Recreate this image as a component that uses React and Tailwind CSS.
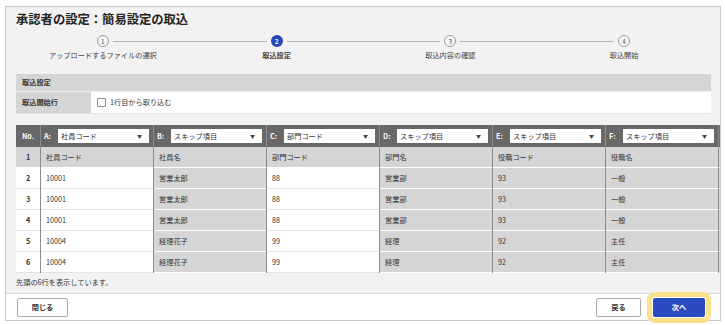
const steps = ["アップロードするファイルの選択", "取込設定", "取込内容の確認", "取込開始"];

const columns = [
  { key: "A", value: "社員コード" },
  { key: "B", value: "スキップ項目" },
  { key: "C", value: "部門コード" },
  { key: "D", value: "スキップ項目" },
  { key: "E", value: "スキップ項目" },
  { key: "F", value: "スキップ項目" },
];

// true = column is skipped (gray)
const skipped = [false, true, false, true, true, true];

const rows = [
  ["1", "社員コード", "社員名", "部門コード", "部門名", "役職コード", "役職名"],
  ["2", "10001", "営業太郎", "88", "営業部", "93", "一般"],
  ["3", "10001", "営業太郎", "88", "営業部", "93", "一般"],
  ["4", "10001", "営業太郎", "88", "営業部", "93", "一般"],
  ["5", "10004", "経理花子", "99", "経理", "92", "主任"],
  ["6", "10004", "経理花子", "99", "経理", "92", "主任"],
];

function Stepper() {
  return (
    <div className="grid grid-cols-4 mt-[7px]">
      {steps.map((label, i) => {
        const active = i === 1;
        return (
          <div key={label} className="flex flex-col items-center">
            <div className="flex items-center w-full h-[12px]">
              <div className={`flex-1 h-px mr-[4px] ${i === 0 ? "" : "bg-[#b5b5b5]"}`} />
              <div
                className={`w-[12px] h-[12px] rounded-full flex items-center justify-center text-[6.5px] leading-none ${
                  active
                    ? "bg-[#2347b9] text-white font-bold"
                    : "border border-[#9a9a9a] bg-[#f7f7f7] text-[#555]"
                }`}
              >
                {i + 1}
              </div>
              <div className={`flex-1 h-px ml-[4px] ${i === 3 ? "" : "bg-[#b5b5b5]"}`} />
            </div>
            <div className={`mt-[3px] leading-[10px] text-[7.2px] text-[#444] ${active ? "font-bold text-[#222]" : ""}`}>
              {label}
            </div>
          </div>
        );
      })}
    </div>
  );
}

function ImportSettings() {
  return (
    <div className="mt-[14px] text-[7.2px] text-[#333]">
      <div className="h-[18px] bg-[#d5d5d5] border-b border-[#f2f2f2] flex items-center pl-[6px] font-bold">
        取込設定
      </div>
      <div className="flex h-[22px] border-b border-[#e2e2e2]">
        <div className="w-[75px] bg-[#d5d5d5] flex items-center pl-[6px] font-bold">取込開始行</div>
        <div className="flex-1 bg-white flex items-center pl-[6px]">
          <span className="w-[9px] h-[9px] border border-[#8a8a8a] bg-white rounded-[1px]" />
          <span className="ml-[4px]">1行目から取り込む</span>
        </div>
      </div>
    </div>
  );
}

function Table() {
  return (
    <div className="mt-[11px] w-[705px] overflow-hidden text-[7.2px] text-[#333]">
      <div className="flex w-max">
        {/* No. column */}
        <div className="w-[24px] shrink-0">
          <div className="h-[22px] bg-[#686868] text-white font-bold flex items-center justify-center">No.</div>
          {rows.map((r, ri) => (
            <div
              key={ri}
              className={`h-[21px] flex items-center justify-center font-bold border-b ${
                ri === 0 ? "bg-[#d5d5d5] border-white" : "bg-white border-[#e4e4e4]"
              }`}
            >
              {r[0]}
            </div>
          ))}
        </div>
        {columns.map((c, ci) => (
          <div key={c.key} className="w-[113px] shrink-0 border-l border-[#8c8c8c]">
            <div className="h-[22px] bg-[#686868] flex items-center pl-[3px] pr-[4px]">
              <span className="w-[14px] text-white font-bold">{c.key}:</span>
              <div className="flex-1 h-[14px] bg-white flex items-center justify-between pl-[3px] pr-[7px] text-[#333]">
                <span>{c.value}</span>
                <span className="text-[5px] text-[#444]">▼</span>
              </div>
            </div>
            {rows.map((r, ri) => {
              const gray = ri === 0 || skipped[ci];
              return (
                <div
                  key={ri}
                  className={`h-[21px] flex items-center pl-[5px] border-b ${
                    gray ? "bg-[#d5d5d5] border-white" : "bg-white border-[#e4e4e4]"
                  }`}
                >
                  {r[ci + 1]}
                </div>
              );
            })}
          </div>
        ))}
        {/* next column, scrolled out of view */}
        <div className="w-[40px] shrink-0 border-l border-[#8c8c8c]">
          <div className="h-[22px] bg-[#686868]" />
          {rows.map((r, ri) => (
            <div key={ri} className="h-[21px] bg-[#d5d5d5] border-b border-white" />
          ))}
        </div>
      </div>
    </div>
  );
}

export default function App() {
  return (
    <div
      className="w-[725px] h-[325px] bg-white pl-[5px] pt-[6px]"
      style={{ fontFamily: '"Noto Sans CJK JP", "Noto Sans", sans-serif' }}
    >
      <div className="w-[716px] h-[315px] border border-[#c9c9c9] bg-[#f2f2f2] flex flex-col">
        <div className="flex-1 pl-[10px] pr-[9px] overflow-hidden">
          <h1 className="pt-[3px] text-[12.3px] leading-[18px] font-bold text-[#222]">
            承認者の設定：簡易設定の取込
          </h1>
          <Stepper />
          <ImportSettings />
          <Table />
          <div className="mt-[4px] text-[7.2px] leading-[10px] text-[#333]">先頭の6行を表示しています。</div>
        </div>
        <div className="h-[27px] bg-white border-t border-[#d6d6d6] flex items-center justify-between pl-[11px] pr-[15px]">
          <button className="w-[51px] h-[19px] border border-[#a9a9a9] rounded-[2px] bg-white text-[7.2px] font-bold text-[#333]">
            閉じる
          </button>
          <div className="flex items-center gap-[12px]">
            <button className="w-[45px] h-[19px] border border-[#a9a9a9] rounded-[2px] bg-white text-[7.2px] font-bold text-[#333]">
              戻る
            </button>
            <button className="w-[52px] h-[19px] rounded-[2px] bg-[#2b4cc0] text-white text-[7.2px] font-bold outline-[5px] outline-solid outline-[#fbe08a] outline-offset-[1px]">
              次へ
            </button>
          </div>
        </div>
      </div>
    </div>
  );
}
